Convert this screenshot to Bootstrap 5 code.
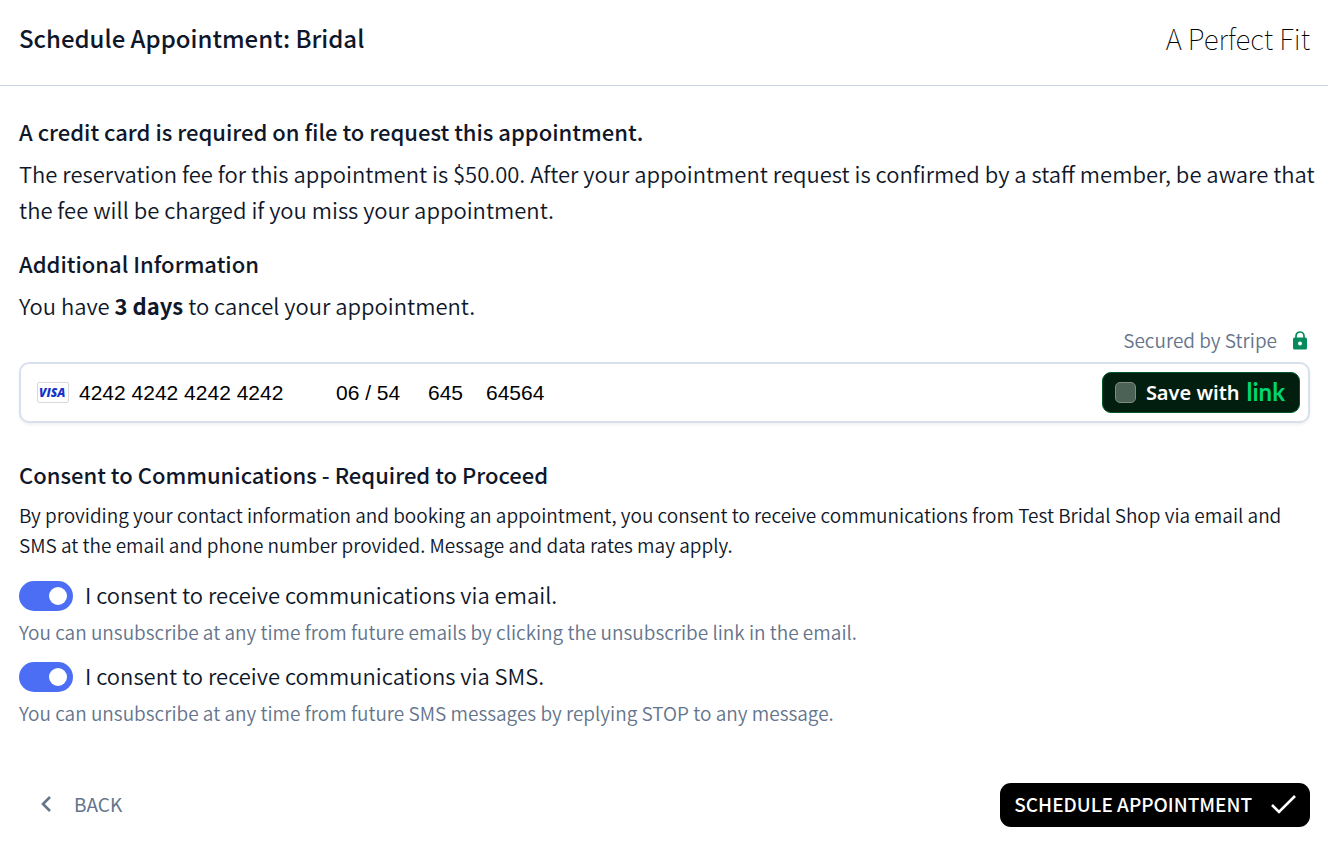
<!DOCTYPE html>
<html lang="en">
<head>
<meta charset="utf-8">
<meta name="viewport" content="width=device-width, initial-scale=1">
<title>Schedule Appointment: Bridal</title>
<link href="https://cdn.jsdelivr.net/npm/bootstrap@5.3.0/dist/css/bootstrap.min.css" rel="stylesheet">
<style>
  body { font-family: "Noto Sans CJK JP", "Noto Sans", sans-serif; font-size: 22px; font-weight: 350; line-height: 36px; color: #0f172a; }
  strong { font-weight: 700; }
  .page-head { border-bottom: 1px solid #cbd5e1; padding: 20px 18px 29px 19px; }
  .page-head h1 { font-size: 24px; line-height: 36px; font-weight: 500; }
  .shop-name { font-size: 28px; font-weight: 100; color: #000; }
  main { padding: 27px 18px 0 19px; }
  h2 { font-size: 22px; line-height: 36px; font-weight: 500; margin-bottom: 6px; }
  .section-gap { margin-top: 18px; }
  .fee-note { margin: 0 -10px 0 0; }
  .fine { font-size: 19px; line-height: 30px; }
  .muted { color: #64748b; }
  .secured { margin-top: 2px; }
  .card-field { border: 2px solid #d7e0ec; border-radius: 10px; padding: 8px 8px 8px 16px; margin-top: 7px; box-shadow: 0 2px 3px rgba(0,0,0,.06); }
  .card-field input[type=text] { font-family: "Liberation Sans", sans-serif; font-size: 21px; line-height: 26px; border: 0; padding: 0; color: #000; background: transparent; outline: 0; }
  .in-number { width: 257px; margin-left: 10px; }
  .in-date { width: 92px; }
  .in-cvc { width: 58px; }
  .in-zip { width: 90px; }
  .visa { width: 32px; height: 21px; }
  .save-link { background: #011e0f; border: 1px solid #00572b; border-radius: 9px; padding: 0 14px 0 12px; height: 41px; color: #fff; font-family: "Noto Sans", sans-serif; font-size: 20px; font-weight: 600; }
  .save-link input { appearance: none; width: 21px; height: 21px; background: #4d6256; border: 1px solid #808a85; border-radius: 5px; margin: 0 10px 0 0; }
  .link-word { font-family: Lato, sans-serif; font-size: 24px; font-weight: 700; line-height: 32px; padding-bottom: 2px; color: #00d66f; margin-left: 7px; }
  .consent-title { margin-top: 33px; margin-bottom: 8px; }
  .consent-text { margin-bottom: 18px; }
  .consent { margin-bottom: 12px; }
  .consent .form-switch { padding: 0; min-height: 0; margin-bottom: 3px; }
  .form-switch label { line-height: 32px; }
  .form-switch .form-check-input { width: 54px; height: 30px; margin: 0 12px 0 0; float: none; border: 0; background-color: #4c6ef5; background-size: 30px 24px;
    background-image: url("data:image/svg+xml,%3csvg xmlns='http://www.w3.org/2000/svg' viewBox='0 0 30 24'%3e%3ccircle cx='15' cy='12' r='9' fill='white'/%3e%3c/svg%3e"); }
  .actions { margin-top: 55px; padding-bottom: 32px; }
  .actions .btn { font-size: 19px; line-height: 30px; height: 44px; border-radius: 11px; padding: 0 14px 2px; border: 0; }
  .btn-back { color: #64748b; }
  .actions .btn-go { background: #000; color: #fff; font-weight: 500; }
</style>
</head>
<body>
<header class="page-head d-flex justify-content-between align-items-center">
  <h1 class="m-0">Schedule Appointment: Bridal</h1>
  <div class="shop-name">A Perfect Fit</div>
</header>
<main>
  <form>
    <h2>A credit card is required on file to request this appointment.</h2>
    <p class="fee-note">The reservation fee for this appointment is $50.00. After your appointment request is confirmed by a staff member, be aware that the fee will be charged if you miss your appointment.</p>
    <h2 class="section-gap">Additional Information</h2>
    <p class="mb-0">You have <strong>3 days</strong> to cancel your appointment.</p>

    <div class="secured fine muted d-flex justify-content-end align-items-center">
      <span>Secured by Stripe</span>
      <svg class="ms-3" width="17" height="19" viewBox="1 0 17 19" aria-hidden="true"><path d="M4 7V5a4 4 0 0 1 8 0v2" fill="none" stroke="#058a5e" stroke-width="1.7"/><rect x="1" y="6.500" width="14" height="12" rx="1.500" fill="#058a5e"/><circle cx="8" cy="12.500" r="2" fill="#fff"/></svg>
    </div>

    <div class="card-field d-flex align-items-center">
      <svg class="visa flex-shrink-0" viewBox="0 0 32 21" role="img" aria-label="Visa"><rect x=".5" y=".5" width="31" height="20" rx="1.500" fill="#fff" stroke="#d9d9d9"/><text x="2" y="15" font-family="Open Sans, sans-serif" font-weight="800" font-style="italic" font-size="12" fill="#1434cb">VISA</text></svg>
      <input class="in-number" type="text" value="4242 4242 4242 4242" aria-label="Card number">
      <input class="in-date" type="text" value="06 / 54" aria-label="Expiry date">
      <input class="in-cvc" type="text" value="645" aria-label="CVC">
      <input class="in-zip" type="text" value="64564" aria-label="ZIP code">
      <label class="save-link ms-auto d-flex align-items-center"><input type="checkbox"><span>Save with</span><span class="link-word">link</span></label>
    </div>

    <h2 class="consent-title">Consent to Communications - Required to Proceed</h2>
    <p class="fine consent-text">By providing your contact information and booking an appointment, you consent to receive communications from Test Bridal Shop via email and SMS at the email and phone number provided. Message and data rates may apply.</p>

    <div class="consent">
      <div class="form-check form-switch d-flex align-items-center">
        <input class="form-check-input" type="checkbox" role="switch" id="viaEmail" checked>
        <label class="pb-1" for="viaEmail">I consent to receive communications via email.</label>
      </div>
      <div class="fine muted">You can unsubscribe at any time from future emails by clicking the unsubscribe link in the email.</div>
    </div>
    <div class="consent">
      <div class="form-check form-switch d-flex align-items-center">
        <input class="form-check-input" type="checkbox" role="switch" id="viaSms" checked>
        <label class="pb-1" for="viaSms">I consent to receive communications via SMS.</label>
      </div>
      <div class="fine muted">You can unsubscribe at any time from future SMS messages by replying STOP to any message.</div>
    </div>

    <div class="actions d-flex justify-content-between">
      <button type="button" class="btn btn-back d-flex align-items-center gap-2"><svg width="33" height="24" viewBox="0 0 33 24" aria-hidden="true"><path d="M17 5l-7 7 7 7" fill="none" stroke="#64748b" stroke-width="2.600"/></svg><span>BACK</span></button>
      <button type="submit" class="btn btn-go d-flex align-items-center"><span>SCHEDULE APPOINTMENT</span><svg class="ms-3" width="28" height="24" viewBox="0 0 28 24" aria-hidden="true"><path d="M4 13l7 7L27 4" fill="none" stroke="#fff" stroke-width="2.600"/></svg></button>
    </div>
  </form>
</main>
<script src="https://cdn.jsdelivr.net/npm/bootstrap@5.3.0/dist/js/bootstrap.bundle.min.js"></script>
</body>
</html>
